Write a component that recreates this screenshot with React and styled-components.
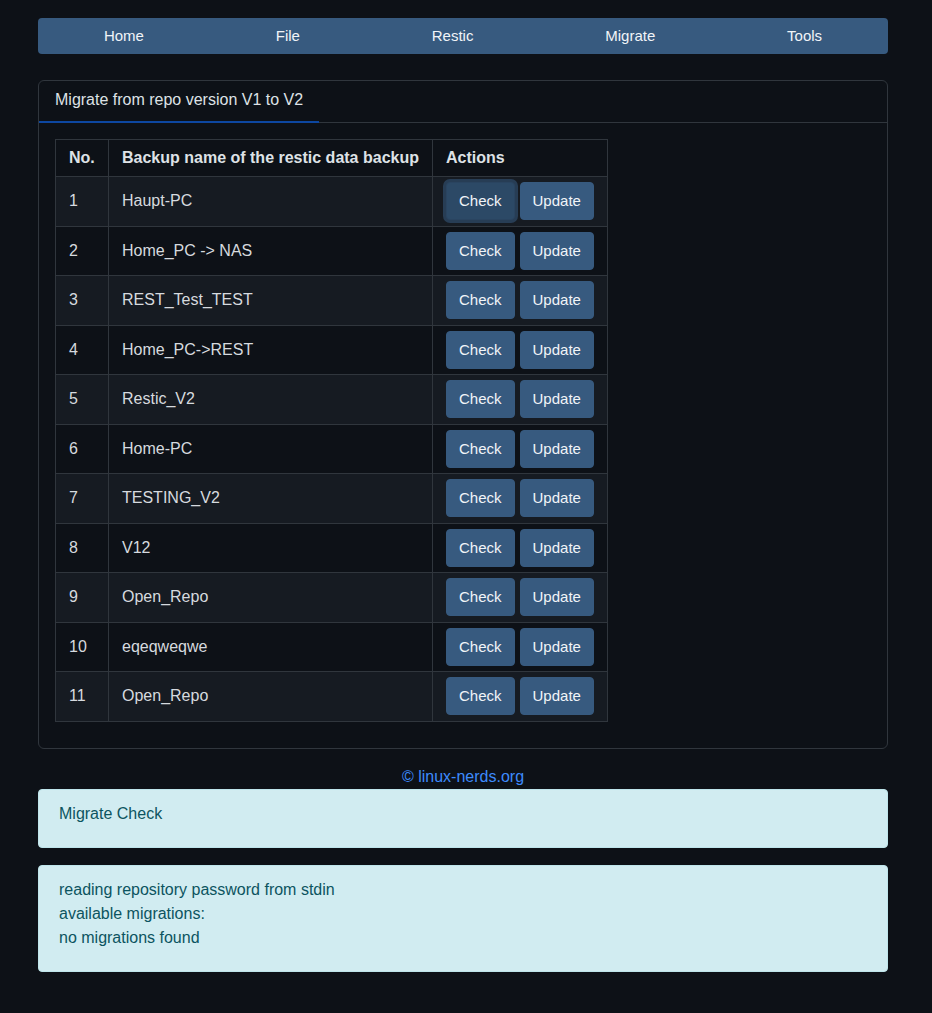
import React, { useState } from "react";
import styled, { createGlobalStyle, css } from "styled-components";

const GlobalStyle = createGlobalStyle`
  html, body {
    margin: 0;
    padding: 0;
    background: #0d1117;
  }
  body {
    font-family: "Liberation Sans", Arial, sans-serif;
    font-size: 16px;
    line-height: 24px;
    color: #dee2e6;
  }
`;

const Page = styled.div`
  width: 850px;
  margin-left: 38px;
  padding: 18px 0 40px;
`;

const NavBar = styled.nav`
  display: flex;
  min-height: 36px;
  background: #375a7f;
  border-radius: 4px;
`;

const NavItem = styled.a`
  flex: 1 1 auto;
  text-align: center;
  padding: 6px 16px;
  font-size: 15px;
  line-height: 24px;
  color: #f1f4f8;
  text-decoration: none;
  cursor: pointer;
`;

const Card = styled.section`
  margin-top: 26px;
  border: 1px solid #30363d;
  border-radius: 6px;
`;

const CardHeader = styled.div`
  display: flex;
  border-bottom: 1px solid #30363d;
`;

const Tab = styled.div`
  padding: 7px 16px 9px;
  border-bottom: 2px solid ${({ active }) => (active ? "#0d47a1" : "transparent")};
  margin-bottom: -1px;
  color: #dee2e6;
`;

const CardBody = styled.div`
  padding: 16px;
`;

const Table = styled.table`
  border-collapse: collapse;
  margin-bottom: 10px;
`;

const HeadCell = styled.th`
  text-align: left;
  font-weight: bold;
  padding: 6px 13px;
  border: 1px solid #30363d;
  white-space: nowrap;
`;

const Row = styled.tr`
  background: ${({ striped }) => (striped ? "#161b22" : "#0d1117")};
`;

const Cell = styled.td`
  padding: 5.25px 13px;
  border: 1px solid #30363d;
  vertical-align: middle;
  color: #d6dadf;
  white-space: nowrap;
  ${({ narrow }) =>
    narrow &&
    css`
      width: 26px;
    `}
  ${({ wide }) =>
    wide &&
    css`
      width: 297px;
    `}
`;

const Button = styled.button`
  font-family: inherit;
  font-size: 15px;
  line-height: 24px;
  padding: 6px 12px;
  height: 38px;
  border-radius: 4px;
  border: 1px solid #375a7f;
  background: #375a7f;
  color: #f1f4f8;
  cursor: pointer;
  & + & {
    margin-left: 5px;
  }
  ${({ focused }) =>
    focused &&
    css`
      background: #2c4966;
      border-color: #2a4460;
      box-shadow: 0 0 0 3px rgba(55, 90, 127, 0.55);
    `}
`;

const Footer = styled.div`
  margin-top: 18px;
  text-align: center;
  line-height: 20px;
  color: #3d8bfd;
`;

const Alert = styled.div`
  margin-top: ${({ first }) => (first ? "2px" : "17px")};
  padding: 12px 20px 21px;
  background: #d1ecf1;
  border: 1px solid #bee5eb;
  border-radius: 4px;
  color: #0c5460;
`;

const backups = [
  "Haupt-PC",
  "Home_PC -> NAS",
  "REST_Test_TEST",
  "Home_PC->REST",
  "Restic_V2",
  "Home-PC",
  "TESTING_V2",
  "V12",
  "Open_Repo",
  "eqeqweqwe",
  "Open_Repo",
];

const menu = ["Home", "File", "Restic", "Migrate", "Tools"];

function App() {
  const [focused, setFocused] = useState(0);

  return (
    <>
      <GlobalStyle />
      <Page>
        <NavBar>
          {menu.map((item) => (
            <NavItem key={item}>{item}</NavItem>
          ))}
        </NavBar>

        <Card>
          <CardHeader>
            <Tab active>Migrate from repo version V1 to V2</Tab>
          </CardHeader>
          <CardBody>
            <Table>
              <thead>
                <tr>
                  <HeadCell>No.</HeadCell>
                  <HeadCell>Backup name of the restic data backup</HeadCell>
                  <HeadCell>Actions</HeadCell>
                </tr>
              </thead>
              <tbody>
                {backups.map((name, i) => (
                  <Row key={i} striped={i % 2 === 0}>
                    <Cell narrow>{i + 1}</Cell>
                    <Cell wide>{name}</Cell>
                    <Cell>
                      <Button focused={focused === i} onClick={() => setFocused(i)}>
                        Check
                      </Button>
                      <Button>Update</Button>
                    </Cell>
                  </Row>
                ))}
              </tbody>
            </Table>
          </CardBody>
        </Card>

        <Footer>© linux-nerds.org</Footer>

        <Alert first>Migrate Check</Alert>
        <Alert>
          reading repository password from stdin
          <br />
          available migrations:
          <br />
          no migrations found
        </Alert>
      </Page>
    </>
  );
}

export default App;
